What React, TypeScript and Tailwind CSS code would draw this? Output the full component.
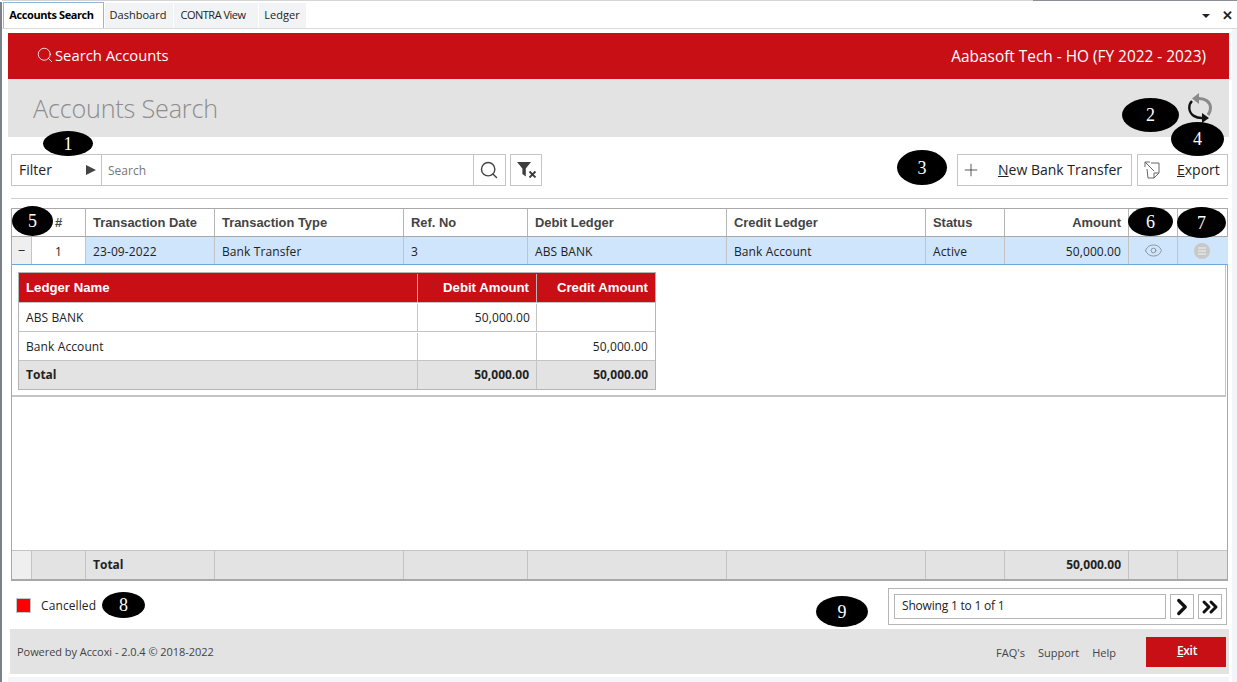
import { ChevronRight, ChevronsRight, Eye, Plus, Search } from "lucide-react";

const SEGOE = "font-['Open_Sans','Noto_Sans',sans-serif]";
const ARIAL = "font-['Liberation_Sans',Arial,sans-serif]";

const COLS = [
  { label: "", w: "w-[20px]" },
  { label: "#", w: "w-[54px]", center: true },
  { label: "Transaction Date", w: "w-[129px]" },
  { label: "Transaction Type", w: "w-[189px]" },
  { label: "Ref. No", w: "w-[124px]" },
  { label: "Debit Ledger", w: "w-[199px]" },
  { label: "Credit Ledger", w: "w-[199px]" },
  { label: "Status", w: "w-[79px]" },
  { label: "Amount", w: "w-[124px]", right: true },
  { label: "", w: "w-[49px]" },
  { label: "", w: "w-[50px]" },
];

const ROW = ["", "1", "23-09-2022", "Bank Transfer", "3", "ABS BANK", "Bank Account", "Active", "50,000.00"];

const MARKERS = [
  { n: 1, cls: "left-[43px] top-[131px] w-[50px] h-[25px]" },
  { n: 2, cls: "left-[1122px] top-[98px] w-[57px] h-[34px]" },
  { n: 3, cls: "left-[897px] top-[150px] w-[50px] h-[35px]" },
  { n: 4, cls: "left-[1171px] top-[122px] w-[53px] h-[34px]" },
  { n: 5, cls: "left-[12px] top-[206px] w-[41px] h-[30px]" },
  { n: 6, cls: "left-[1128px] top-[207px] w-[45px] h-[29px]" },
  { n: 7, cls: "left-[1177px] top-[207px] w-[49px] h-[31px]" },
  { n: 8, cls: "left-[102px] top-[592px] w-[43px] h-[26px]" },
  { n: 9, cls: "left-[816px] top-[596px] w-[52px] h-[31px]" },
];

function RefreshIcon() {
  return (
    <svg width="28" height="32" viewBox="0 0 28 32" fill="none">
      <path d="M6 6.5 L13 1 L13 12 Z" fill="#8a8a8a" />
      <path d="M12 6.5 C19 6 24.5 10 24.5 16 C24.5 19 23.5 21 22 23" stroke="#8a8a8a" strokeWidth="3" />
      <path d="M6 9 C4 11 3 13.5 3.3 16.5 C4 23 10 26.5 17 26" stroke="#111" strokeWidth="2.4" />
      <path d="M23 26 L16 31 L16 21 Z" fill="#111" />
    </svg>
  );
}

function ExportIcon() {
  return (
    <svg width="16" height="18" viewBox="0 0 16 18" fill="none" stroke="#666" strokeWidth="1">
      <path d="M7 2 H15 V12 L10 17 H4 L3 8" />
      <path d="M15 12 H10 V17" />
      <path d="M1 1 L10 10" />
      <path d="M1 6 V1 H6" />
    </svg>
  );
}

function ClearFilterIcon() {
  return (
    <svg width="21" height="16" viewBox="0 0 21 16" fill="#3c3c3c">
      <path d="M0 0 H14 L8.8 6.5 V14.5 L5.4 12 V6.5 Z" />
      <path d="M12.5 9.5 L18.5 15.5 M18.5 9.5 L12.5 15.5" stroke="#3c3c3c" strokeWidth="1.8" />
    </svg>
  );
}

function MenuDisc() {
  return (
    <svg width="16" height="16" viewBox="0 0 16 16" className="-ml-[2px]">
      <circle cx="8" cy="8" r="8" fill="#c8c8c8" />
      <path d="M4 5 H12 M4 8 H12 M4 11 H12" stroke="#e4e4e4" strokeWidth="1.4" />
    </svg>
  );
}

export default function App() {
  return (
    <div className={`relative flex h-[682px] w-[1237px] overflow-hidden bg-white ${SEGOE}`}>
      {/* window edge */}
      <div className="mt-[2px] w-[2px] shrink-0 bg-[#79808a]" />

      <div className="flex w-[1235px] flex-col">
        <div className="flex h-[1px] shrink-0 bg-[#d5d5d5]">
          <div className="ml-auto w-[204px] bg-[#8a9096]" />
        </div>

        {/* tab strip */}
        <div className="flex h-[28px] shrink-0 items-end border-b border-[#d9d9d9] bg-white pl-[1px]">
          <div className="flex h-[26px] w-[101px] items-center justify-center border-x border-t border-[#8fb8de] pr-[4px] text-[11px] font-bold tracking-[-0.4px] text-black">
            Accounts Search
          </div>
          <div className="ml-[1px] flex h-[25px] w-[68px] items-center justify-center bg-[#f1f3f4] pr-[2px] text-[11px] text-[#222]">Dashboard</div>
          <div className="ml-[1px] flex h-[25px] w-[84px] items-center justify-center bg-[#f1f3f4] pr-[6px] text-[11px] tracking-[-0.5px] text-[#222]">CONTRA View</div>
          <div className="ml-[1px] flex h-[25px] w-[47px] items-center justify-center bg-[#f1f3f4] pr-[1px] text-[11px] text-[#222]">Ledger</div>
          <div className="ml-auto flex h-[25px] items-center gap-[12px] pr-[4px]">
            <div className="h-0 w-0 border-x-[4px] border-t-[4px] border-x-transparent border-t-[#222]" />
            <span className="text-[13px] leading-none font-bold text-[#222]">✕</span>
          </div>
        </div>

        <div className="flex flex-1">
          <div className="ml-[6px] mt-[4px] flex w-[1221px] shrink-0 flex-col">
            {/* red bar */}
            <div className="flex h-[46px] shrink-0 items-center justify-between bg-[#c80f16] pl-[28px] pr-[23px] text-white">
              <div className="flex items-center gap-[1px] pb-[2px] text-[14.8px]">
                <Search size={18} strokeWidth={1.1} />
                <span>Search Accounts</span>
              </div>
              <span className="pt-[1px] text-[15.4px]">Aabasoft Tech - HO (FY 2022 - 2023)</span>
            </div>

            {/* page title */}
            <div className="flex h-[58px] shrink-0 items-center justify-between bg-[#e3e3e3] pl-[25px] pr-[15px]">
              <span className="pt-[1px] text-[25.2px] font-light tracking-[-0.2px] text-[#8d8d8d]">Accounts Search</span>
              <div className="mt-[-1px]">
                <RefreshIcon />
              </div>
            </div>

            {/* toolbar */}
            <div className="mt-[17px] flex h-[32px] shrink-0 pl-[3px] pr-[1px]">
              <div className="flex w-[91px] items-center justify-between border border-[#c4c4c4] pl-[7px] pr-[5px] text-[14px] text-[#222]">
                <span className="pb-[2px]">Filter</span>
                <div className="h-0 w-0 border-y-[5px] border-l-[10px] border-y-transparent border-l-[#444]" />
              </div>
              <div className="flex w-[372px] items-center border-y border-r border-[#c4c4c4] pl-[6px] pt-[1px] text-[12px] text-[#777]">Search</div>
              <div className="flex w-[32px] items-center justify-center border-y border-r border-[#c4c4c4] pr-[1px]">
                <Search size={20} strokeWidth={1.7} color="#444" />
              </div>
              <div className="ml-[4px] flex w-[32px] items-center justify-center border border-[#c4c4c4] pl-[3px]">
                <ClearFilterIcon />
              </div>
              <div className="ml-auto flex w-[175px] items-center border border-[#c4c4c4] pl-[3px] text-[14px] text-[#222]">
                <Plus size={20} strokeWidth={0.9} color="#222" />
                <span className="ml-[17px] pb-[2px]"><u>N</u>ew Bank Transfer</span>
              </div>
              <div className="ml-[5px] flex w-[91px] items-center border border-[#c4c4c4] pl-[6px] text-[14px] text-[#222]">
                <ExportIcon />
                <span className="ml-[17px] pb-[2px]"><u>E</u>xport</span>
              </div>
            </div>

            <div className="ml-[3px] mr-[1px] mt-[12px] h-[1px] shrink-0 bg-[#cfcfcf]" />

            {/* grid */}
            <div className="ml-[3px] mt-[9px] flex h-[373px] w-[1217px] shrink-0 flex-col border-x border-b-2 border-[#a8a8a8] text-[12px] tracking-[0.1px]">
              <div className={`flex h-[29px] border-t border-b border-[#a8a8a8] tracking-normal ${ARIAL}`}>
                {COLS.map((c, i) => (
                  <div
                    key={i}
                    className={`flex shrink-0 items-center border-r border-[#b5b5b5] px-[7px] pt-[1px] text-[12.9px] font-bold text-[#444] last:border-r-0 ${c.w} ${c.center ? "justify-center" : ""} ${c.right ? "justify-end" : ""}`}
                  >
                    {c.label}
                  </div>
                ))}
              </div>

              <div className="flex h-[28px] border-b border-[#6ea7dc] text-[#222]">
                {COLS.map((c, i) => {
                  if (i === 0) {
                    return (
                      <div key={i} className="flex w-[20px] shrink-0 items-center justify-center border-r border-[#c4c4c4] bg-[#efefef] text-[13px] leading-none">
                        −
                      </div>
                    );
                  }
                  if (i === 1) {
                    return (
                      <div key={i} className="flex w-[54px] shrink-0 items-center justify-center border-r border-[#c4c4c4] bg-white pt-[2px]">
                        {ROW[i]}
                      </div>
                    );
                  }
                  return (
                    <div
                      key={i}
                      className={`flex shrink-0 items-center border-r border-[#c4c4c4] bg-[#cfe5fb] px-[7px] last:border-r-0 ${c.w} ${c.right ? "justify-end" : ""} ${i > 8 ? "justify-center" : "pt-[2px]"}`}
                    >
                      {i === 9 ? <Eye size={19} strokeWidth={0.9} color="#777" className="shrink-0" /> : i === 10 ? <MenuDisc /> : ROW[i]}
                    </div>
                  );
                })}
              </div>

              {/* expanded detail */}
              <div className="mr-[1px] h-[132px] shrink-0 border-r border-b-2 border-[#c4c4c4] pl-[6px] pt-[7px]">
                <div className="w-[638px] border border-[#b5b5b5]">
                  <div className={`flex h-[29px] items-center bg-[#c80f16] pt-[1px] text-[13.2px] font-bold tracking-normal text-white ${ARIAL}`}>
                    <div className="flex h-full w-[399px] items-center border-r border-[#b5b5b5] px-[7px]">Ledger Name</div>
                    <div className="flex h-full w-[119px] items-center justify-end border-r border-[#b5b5b5] pl-[6px] pr-[7px]">Debit Amount</div>
                    <div className="flex h-full w-[118px] items-center justify-end px-[7px]">Credit Amount</div>
                  </div>
                  <div className="flex h-[29px] items-center border-t border-[#c4c4c4] pt-[1px] text-[#222]">
                    <div className="flex h-full w-[399px] items-center border-r border-[#c4c4c4] px-[7px]">ABS BANK</div>
                    <div className="flex h-full w-[119px] items-center justify-end border-r border-[#c4c4c4] px-[6px]">50,000.00</div>
                    <div className="h-full w-[118px]" />
                  </div>
                  <div className="flex h-[29px] items-center border-t border-[#c4c4c4] pt-[1px] text-[#222]">
                    <div className="flex h-full w-[399px] items-center border-r border-[#c4c4c4] px-[7px]">Bank Account</div>
                    <div className="h-full w-[119px] border-r border-[#c4c4c4]" />
                    <div className="flex h-full w-[118px] items-center justify-end px-[7px]">50,000.00</div>
                  </div>
                  <div className="flex h-[29px] items-center border-t border-[#c4c4c4] bg-[#e3e3e3] font-bold tracking-normal text-[#222]">
                    <div className="flex h-full w-[399px] items-center border-r border-[#c4c4c4] px-[7px]">Total</div>
                    <div className="flex h-full w-[119px] items-center justify-end border-r border-[#c4c4c4] pl-[6px] pr-[7px]">50,000.00</div>
                    <div className="flex h-full w-[118px] items-center justify-end px-[7px]">50,000.00</div>
                  </div>
                </div>
              </div>

              {/* grid total */}
              <div className="mt-auto flex h-[29px] border-t border-[#c4c4c4] bg-[#e3e3e3] font-bold tracking-normal text-[#222]">
                {COLS.map((c, i) => (
                  <div
                    key={i}
                    className={`flex shrink-0 items-center border-r border-[#c4c4c4] px-[7px] last:border-r-0 ${c.w} ${c.right ? "justify-end" : ""} ${i === 0 ? "bg-[#efefef]" : ""}`}
                  >
                    {i === 2 ? "Total" : i === 8 ? "50,000.00" : ""}
                  </div>
                ))}
              </div>
            </div>

            {/* legend and pager */}
            <div className="flex h-[48px] shrink-0 items-start pr-[2px]">
              <div className="ml-[8px] mt-[17px] h-[15px] w-[15px] border border-[#c4c4c4] bg-[#ff0000]" />
              <span className="ml-[10px] mt-[16px] text-[12px] tracking-[0.1px] text-[#222]">Cancelled</span>
              <div className="ml-auto mt-[7px] flex h-[37px] w-[339px] items-center border border-[#b5b5b5] pl-[5px] text-[12px] text-[#222]">
                <div className="flex h-[25px] w-[272px] items-center border border-[#b5b5b5] px-[7px] pb-[1px] tracking-[-0.2px]">Showing 1 to 1 of 1</div>
                <div className="ml-[4px] flex h-[25px] w-[24px] items-center justify-center border border-[#b5b5b5]">
                  <ChevronRight size={26} strokeWidth={3} color="#111" className="shrink-0" />
                </div>
                <div className="ml-[4px] flex h-[25px] w-[24px] items-center justify-center border border-[#b5b5b5]">
                  <ChevronsRight size={24} strokeWidth={3} color="#111" className="shrink-0" />
                </div>
              </div>
            </div>

            {/* footer */}
            <div className="ml-[2px] flex h-[45px] shrink-0 items-center justify-between bg-[#e3e3e3] pl-[7px] pr-[3px] text-[11px] text-[#444]">
              <span className="pt-[1px] tracking-[-0.05px]">Powered by Accoxi - 2.0.4 © 2018-2022</span>
              <div className="flex items-center">
                <span className="pt-[3px]">FAQ&apos;s</span>
                <span className="ml-[13px] pt-[3px]">Support</span>
                <span className="ml-[13px] pt-[3px]">Help</span>
                <div className="ml-[30px] flex h-[30px] w-[80px] items-center justify-center bg-[#c80f16] pl-[2px] text-[12px] font-semibold tracking-[-0.3px] text-white">
                  <span className="pb-[2px]"><u>E</u>xit</span>
                </div>
              </div>
            </div>

            <div className="mt-[3px] flex-1 bg-[#f3f5f8]" />
          </div>

          <div className="ml-[3px] flex-1 bg-[#f3f5f8]" />
        </div>
      </div>

      {/* numbered callouts */}
      {MARKERS.map(m => (
        <div
          key={m.n}
          className={`absolute flex items-center justify-center rounded-[50%] bg-black font-['Liberation_Serif',serif] text-[18px] leading-none text-white ${m.cls}`}
        >
          {m.n}
        </div>
      ))}
    </div>
  );
}
